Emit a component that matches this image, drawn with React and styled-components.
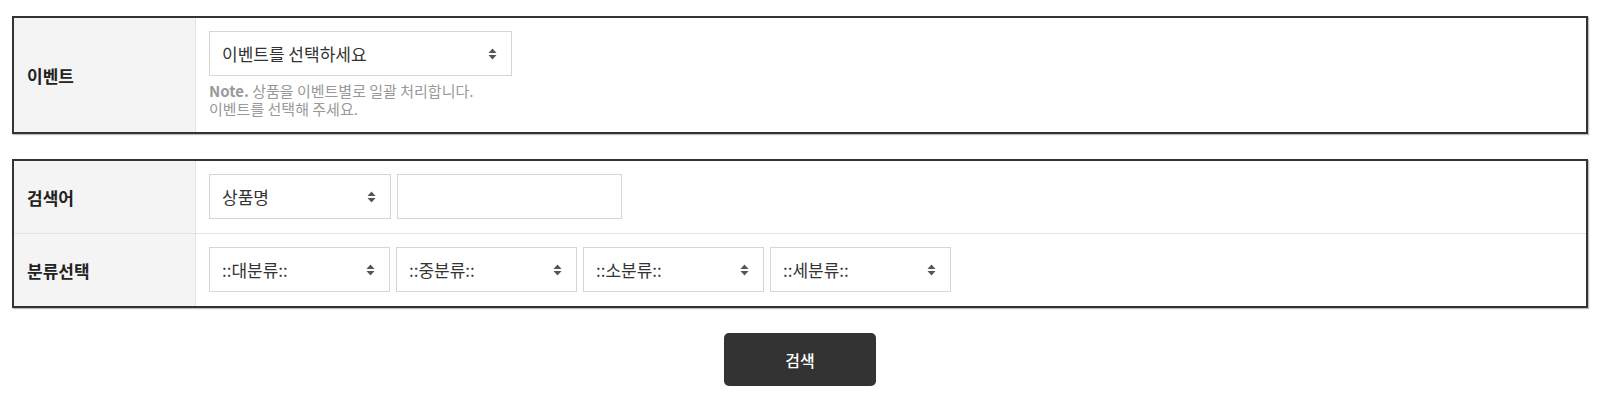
import React, { useState } from "react";
import styled, { createGlobalStyle } from "styled-components";

const GlobalStyle = createGlobalStyle`
  html, body {
    margin: 0;
    padding: 0;
    background: #fff;
    font-family: "Noto Sans CJK KR", "Noto Sans", sans-serif;
    color: #333;
  }
`;

const categories = ["::대분류::", "::중분류::", "::소분류::", "::세분류::"];

const ArrowIcon = () => (
    <svg width="9" height="12" viewBox="0 0 9 12">
        <path d="M4.5 0.5 L8.5 5 H0.5 Z" fill="#555" />
        <path d="M4.5 11.5 L8.5 7 H0.5 Z" fill="#555" />
    </svg>
);

const Select = ({ width, value, options }) => {
    const [val, setVal] = useState(value);
    return (
        <SelectWrap $width={width}>
            <StyledSelect value={val} onChange={(e) => setVal(e.target.value)}>
                {options.map((opt) => (
                    <option key={opt} value={opt}>{opt}</option>
                ))}
            </StyledSelect>
            <span className="arrow"><ArrowIcon /></span>
        </SelectWrap>
    );
};

const App = () => {
    return (
        <>
            <GlobalStyle />
            <Page>
                <Board>
                    <Row>
                        <Label>이벤트</Label>
                        <Cell>
                            <Select width={303} value="이벤트를 선택하세요" options={["이벤트를 선택하세요"]} />
                            <Note>
                                <b>Note.</b> 상품을 이벤트별로 일괄 처리합니다.<br />
                                이벤트를 선택해 주세요.
                            </Note>
                        </Cell>
                    </Row>
                </Board>

                <Board>
                    <Row>
                        <Label>검색어</Label>
                        <Cell>
                            <Controls>
                                <Select width={182} value="상품명" options={["상품명", "상품코드", "모델명"]} />
                                <TextInput type="text" />
                            </Controls>
                        </Cell>
                    </Row>
                    <Row $divider>
                        <Label>분류선택</Label>
                        <Cell>
                            <Controls>
                                {categories.map((c) => (
                                    <Select key={c} width={181} value={c} options={[c]} />
                                ))}
                            </Controls>
                        </Cell>
                    </Row>
                </Board>

                <ButtonBar>
                    <SearchButton type="button">검색</SearchButton>
                </ButtonBar>
            </Page>
        </>
    );
};

const Page = styled.div`
    padding: 16px 12px 0 12px;
    display: flex;
    flex-direction: column;
    gap: 25px;
`;

const Board = styled.div`
    border: 2px solid #333;
    box-shadow: 1px 1px 1px rgba(0, 0, 0, 0.25);
    display: flex;
    flex-direction: column;
`;

const Row = styled.div`
    display: flex;
    flex-direction: row;
    border-top: ${(p) => (p.$divider ? "1px solid #e3e3e3" : "none")};
`;

const Label = styled.div`
    width: 182px;
    flex-shrink: 0;
    box-sizing: border-box;
    background-color: #f4f4f4;
    border-right: 1px solid #e3e3e3;
    display: flex;
    align-items: center;
    padding-left: 13px;
    font-size: 17px;
    font-weight: 700;
    color: #222;
`;

const Cell = styled.div`
    flex: 1;
    padding: 13px 13px 14px 13px;
    display: flex;
    flex-direction: column;
    align-items: flex-start;
`;

const Controls = styled.div`
    display: flex;
    flex-direction: row;
    gap: 6px;
`;

const SelectWrap = styled.div`
    position: relative;
    width: ${(p) => p.$width}px;
    height: 45px;
    .arrow {
        position: absolute;
        right: 15px;
        top: 50%;
        transform: translateY(-50%);
        display: flex;
        pointer-events: none;
    }
`;

const StyledSelect = styled.select`
    appearance: none;
    -webkit-appearance: none;
    width: 100%;
    height: 100%;
    box-sizing: border-box;
    border: 1px solid #d5d5d5;
    border-radius: 0;
    background: #fff;
    padding: 0 30px 0 12px;
    font-family: "Noto Sans CJK KR", "Noto Sans", sans-serif;
    font-size: 17px;
    color: #333;
    outline: none;
`;

const TextInput = styled.input`
    width: 225px;
    height: 45px;
    box-sizing: border-box;
    border: 1px solid #d5d5d5;
    padding: 0 12px;
    font-family: "Noto Sans CJK KR", "Noto Sans", sans-serif;
    font-size: 17px;
    outline: none;
`;

const Note = styled.p`
    margin: 6px 0 0 0;
    font-size: 15px;
    line-height: 18px;
    color: #999;
    b {
        font-weight: 700;
    }
`;

const ButtonBar = styled.div`
    display: flex;
    justify-content: center;
`;

const SearchButton = styled.button`
    width: 152px;
    height: 53px;
    border: none;
    border-radius: 5px;
    background-color: #333;
    color: #fff;
    font-family: "Noto Sans CJK KR", "Noto Sans", sans-serif;
    font-size: 16px;
    font-weight: 500;
    cursor: pointer;
`;

export default App;
